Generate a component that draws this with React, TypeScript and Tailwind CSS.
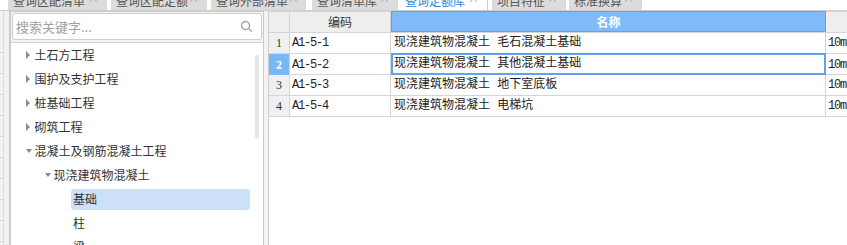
import React from "react";

const tabs = [
  { label: "查询区配清单", cls: "ml-[8px] w-[99px]" },
  { label: "查询区配定额", cls: "ml-[4px] w-[96px]" },
  { label: "查询外部清单", cls: "ml-[4px] w-[95px]" },
  { label: "查询清单库", cls: "ml-[6px] w-[86px]" },
  { label: "查询定额库", cls: "ml-[2px] w-[88px]", active: true },
  { label: "项目特征", cls: "ml-[4px] w-[74px]" },
  { label: "标准换算", cls: "ml-[3px] w-[73px]" },
];

const rows = [
  { no: "1", code: "A1-5-1", name: "现浇建筑物混凝土 毛石混凝土基础" },
  { no: "2", code: "A1-5-2", name: "现浇建筑物混凝土 其他混凝土基础", selected: true },
  { no: "3", code: "A1-5-3", name: "现浇建筑物混凝土 地下室底板" },
  { no: "4", code: "A1-5-4", name: "现浇建筑物混凝土 电梯坑" },
];

function Arrow({ open }: { open?: boolean }) {
  // small grey triangles used by the tree
  return open ? (
    <span className="inline-block w-0 h-0 border-x-[3.5px] border-x-transparent border-t-[4px] border-t-[#8a8a8a]" />
  ) : (
    <span className="inline-block w-0 h-0 border-y-[4px] border-y-transparent border-l-[4px] border-l-[#8a8a8a]" />
  );
}

function TreeItem({ level, label, arrow, selected }: { level: number; label: string; arrow?: "open" | "closed"; selected?: boolean }) {
  const pad = level === 1 ? "pl-[15px]" : level === 2 ? "pl-[34px]" : "pl-[60px]";
  return (
    <div className={`h-[24px] flex items-center ${pad}`}>
      {level < 3 && (
        <span className="w-[8px] flex items-center">
          <Arrow open={arrow === "open"} />
        </span>
      )}
      {level < 3 ? (
        <span className="text-[12px] leading-[16px] text-[#333] ml-[0.5px] whitespace-nowrap">{label}</span>
      ) : (
        <div className={`h-[21px] w-[179px] flex items-center pl-[2px] rounded-[3px] ${selected ? "bg-[#cce1f8]" : ""}`}>
          <span className="text-[12px] leading-[16px] text-[#333]">{label}</span>
        </div>
      )}
    </div>
  );
}

export default function App() {
  return (
    <div className="w-[847px] h-[245px] overflow-hidden bg-white flex flex-col font-['Noto_Sans_CJK_SC',sans-serif]">
      {/* tab strip, cut off at the top */}
      <div className="h-[11px] shrink-0 overflow-hidden flex items-end border-b border-[#cfcfcf] bg-white">
        {tabs.map((t) => (
          <div
            key={t.label}
            className={`shrink-0 h-[26px] flex items-center justify-between pl-[5px] pr-[8px] whitespace-nowrap ${t.cls} ${
              t.active ? "bg-white border-r border-[#cfcfcf]" : "bg-[#dcdcdc]"
            }`}
          >
            <span className={`text-[12px] leading-[16px] mt-[7px] ${t.active ? "text-[#2f86e0]" : "text-[#555]"}`}>{t.label}</span>
            <span className="text-[11px] leading-[16px] mt-[2px] text-[#aaa]">×</span>
          </div>
        ))}
      </div>

      <div className="flex-1 flex min-h-0">
        {/* clipped grid at the far left */}
        <div className="w-[9px] shrink-0 flex bg-[#f2f2f2]">
          <div className="w-[3px] flex flex-col pt-[21px]">
            {Array.from({ length: 12 }).map((_, i) => (
              <div key={i} className="h-[21px] shrink-0 border-b border-[#d6d6d6]" />
            ))}
          </div>
          <div className="w-[1px] bg-[#dcdcdc]" />
        </div>

        {/* left tree panel */}
        <div className="w-[255px] shrink-0 flex flex-col border-x-2 border-t border-[#cbcbcb] border-r-[1px]">
          <div className="h-[31px] shrink-0 border-b border-[#d0d0d0] bg-[#f4f4f4] px-[1px] pt-[1px]">
            <div className="h-[27px] rounded-[3px] border border-[#cfcfcf] bg-white flex items-center justify-between pl-[3px] pr-[8px]">
              <span className="text-[13px] leading-[16px] text-[#a0a0a0]">搜索关键字...</span>
              <svg width="13" height="13" viewBox="0 0 13 13" fill="none" stroke="#a3a3a3" strokeWidth="1.3">
                <circle cx="5.5" cy="5.5" r="4" />
                <path d="M8.5 8.5 L11.8 11.8" />
              </svg>
            </div>
          </div>
          <div className="flex-1 flex bg-white">
            <div className="flex-1 flex flex-col">
              <TreeItem level={1} label="土石方工程" />
              <TreeItem level={1} label="围护及支护工程" />
              <TreeItem level={1} label="桩基础工程" />
              <TreeItem level={1} label="砌筑工程" />
              <TreeItem level={1} label="混凝土及钢筋混凝土工程" arrow="open" />
              <TreeItem level={2} label="现浇建筑物混凝土" arrow="open" />
              <TreeItem level={3} label="基础" selected />
              <TreeItem level={3} label="柱" />
              <TreeItem level={3} label="梁" />
            </div>
            <div className="w-[4px] h-[84px] mt-[12px] mr-[4px] rounded-[2px] bg-[#e6e6e6]" />
          </div>
        </div>

        {/* splitter */}
        <div className="w-[5px] shrink-0 bg-[#f3f3f3] border-r border-[#cfcfcf]" />

        {/* result table */}
        <div className="flex-1 flex flex-col bg-white text-[#222]">
          <div className="h-[22px] shrink-0 grid grid-cols-[21px_101px_435px_1fr] border-y border-[#d4d4d4] bg-[#eeeeee]">
            <div className="border-r border-[#d4d4d4]" />
            <div className="border-r border-[#d4d4d4] flex items-center justify-center text-[12px] leading-[16px] text-[#333]">编码</div>
            <div className="bg-[#80bbf7] border border-[#5ea3ec] mt-[-1px] flex items-center justify-center text-[12px] leading-[16px] text-white font-bold">名称</div>
            <div />
          </div>
          {rows.map((r) => (
            <div key={r.no} className="h-[21px] shrink-0 grid grid-cols-[21px_101px_435px_1fr] border-b border-[#d6d6d6]">
              <div
                className={`border-r border-[#d4d4d4] flex items-center justify-center text-[12px] font-['Liberation_Serif',serif] ${
                  r.selected ? "bg-[#7ab8f5] text-white font-bold" : "bg-[#f0f0f0] text-[#333]"
                }`}
              >
                {r.no}
              </div>
              <div className="border-r border-[#d4d4d4] flex items-center pl-[2px] text-[12px] leading-[14px] tracking-[-1.2px] font-['Liberation_Mono',monospace]">
                {r.code}
              </div>
              <div
                className={`flex items-center text-[12px] leading-[14px] whitespace-nowrap font-['Liberation_Mono','Noto_Sans_CJK_SC',monospace] ${
                  r.selected ? "border-2 border-[#5ea3ec] mt-[-1px] h-[22px] pl-[1px]" : "border-r border-[#d4d4d4] pl-[3px]"
                }`}
              >
                {r.name}
              </div>
              <div className="flex items-center pl-[2px] text-[12px] leading-[14px] tracking-[-1.2px] font-['Liberation_Mono',monospace] overflow-hidden whitespace-nowrap">
                10m
              </div>
            </div>
          ))}
        </div>
      </div>
    </div>
  );
}
